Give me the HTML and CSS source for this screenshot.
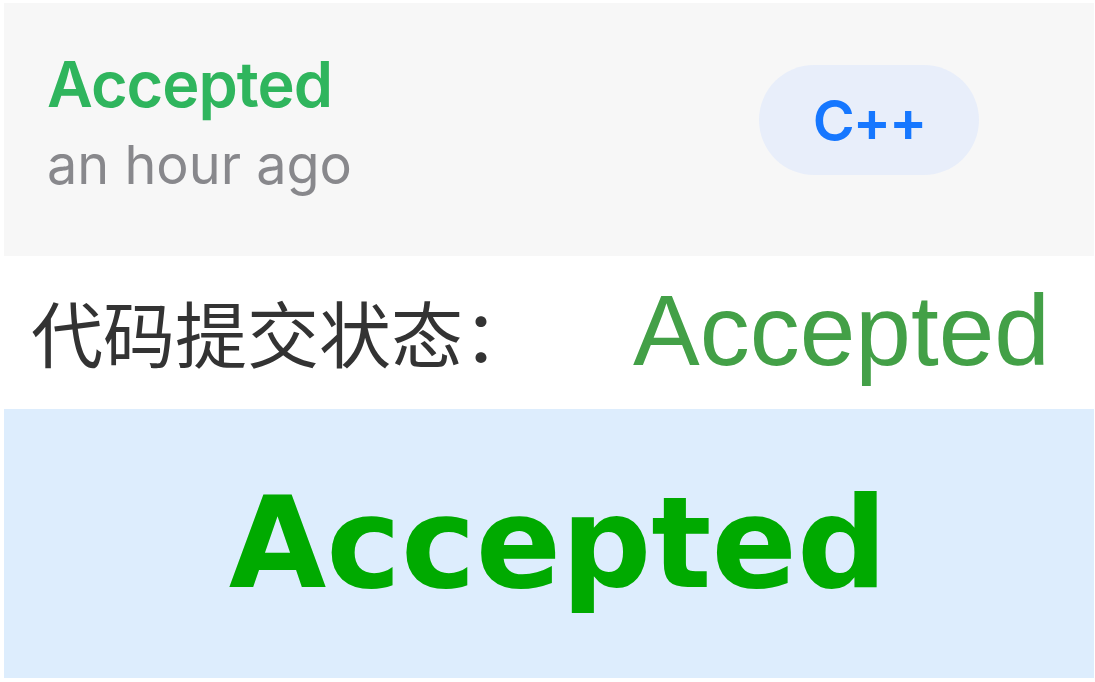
FILE: index.html
```html
<!DOCTYPE html>
<html lang="zh">
<head>
<meta charset="utf-8">
<title>Accepted</title>
<link rel="stylesheet" href="styles.css">
</head>
<body>
<main class="page">
  <section class="submission">
    <div class="submission-info">
      <div class="status">Accepted</div>
      <div class="time">an hour ago</div>
    </div>
    <span class="lang-pill">C++</span>
  </section>
  <section class="status-row">
    <span class="status-label">代码提交状态：</span>
    <span class="status-value">Accepted</span>
  </section>
  <section class="verdict">
    <span class="verdict-text">Accepted</span>
  </section>
</main>
</body>
</html>
```

FILE: styles.css
```css
html, body {
  margin: 0;
  padding: 0;
  background: #ffffff;
}

.page {
  display: flex;
  flex-direction: column;
  padding: 3px 1px 4px 4px;
  height: 682px;
  box-sizing: border-box;
}

.submission {
  height: 253px;
  background: #f7f7f7;
  display: flex;
  justify-content: space-between;
  align-items: flex-start;
  padding: 0 115px 0 43px;
  box-sizing: border-box;
  font-family: "Inter", "Noto Sans", sans-serif;
}

.submission-info {
  display: flex;
  flex-direction: column;
  padding-top: 42px;
}

.status {
  color: #2fb55d;
  font-size: 63px;
  font-weight: 600;
  letter-spacing: -1px;
  line-height: 78px;
}

.time {
  color: #88888c;
  font-size: 54px;
  line-height: 74px;
  margin-top: 5px;
}

.lang-pill {
  margin-top: 62px;
  width: 220px;
  height: 110px;
  border-radius: 55px;
  background: #e8eefa;
  color: #1677ff;
  font-size: 57px;
  font-weight: 600;
  letter-spacing: -2px;
  display: flex;
  align-items: center;
  justify-content: center;
}

.status-row {
  height: 153px;
  background: #ffffff;
  display: flex;
  align-items: center;
  gap: 98px;
  padding: 0 0 4px 27px;
  box-sizing: border-box;
}

.status-label {
  font-family: "Noto Sans CJK SC", sans-serif;
  font-size: 72px;
  color: #333333;
}

.status-value {
  font-family: "Liberation Sans", Arial, sans-serif;
  font-size: 100px;
  color: #43a047;
}

.verdict {
  flex: 1;
  background: #ddedfd;
  display: flex;
  align-items: center;
  justify-content: center;
  padding-left: 18px;
}

.verdict-text {
  font-family: "DejaVu Sans", Verdana, sans-serif;
  font-weight: bold;
  font-size: 126px;
  color: #00aa00;
}
```
